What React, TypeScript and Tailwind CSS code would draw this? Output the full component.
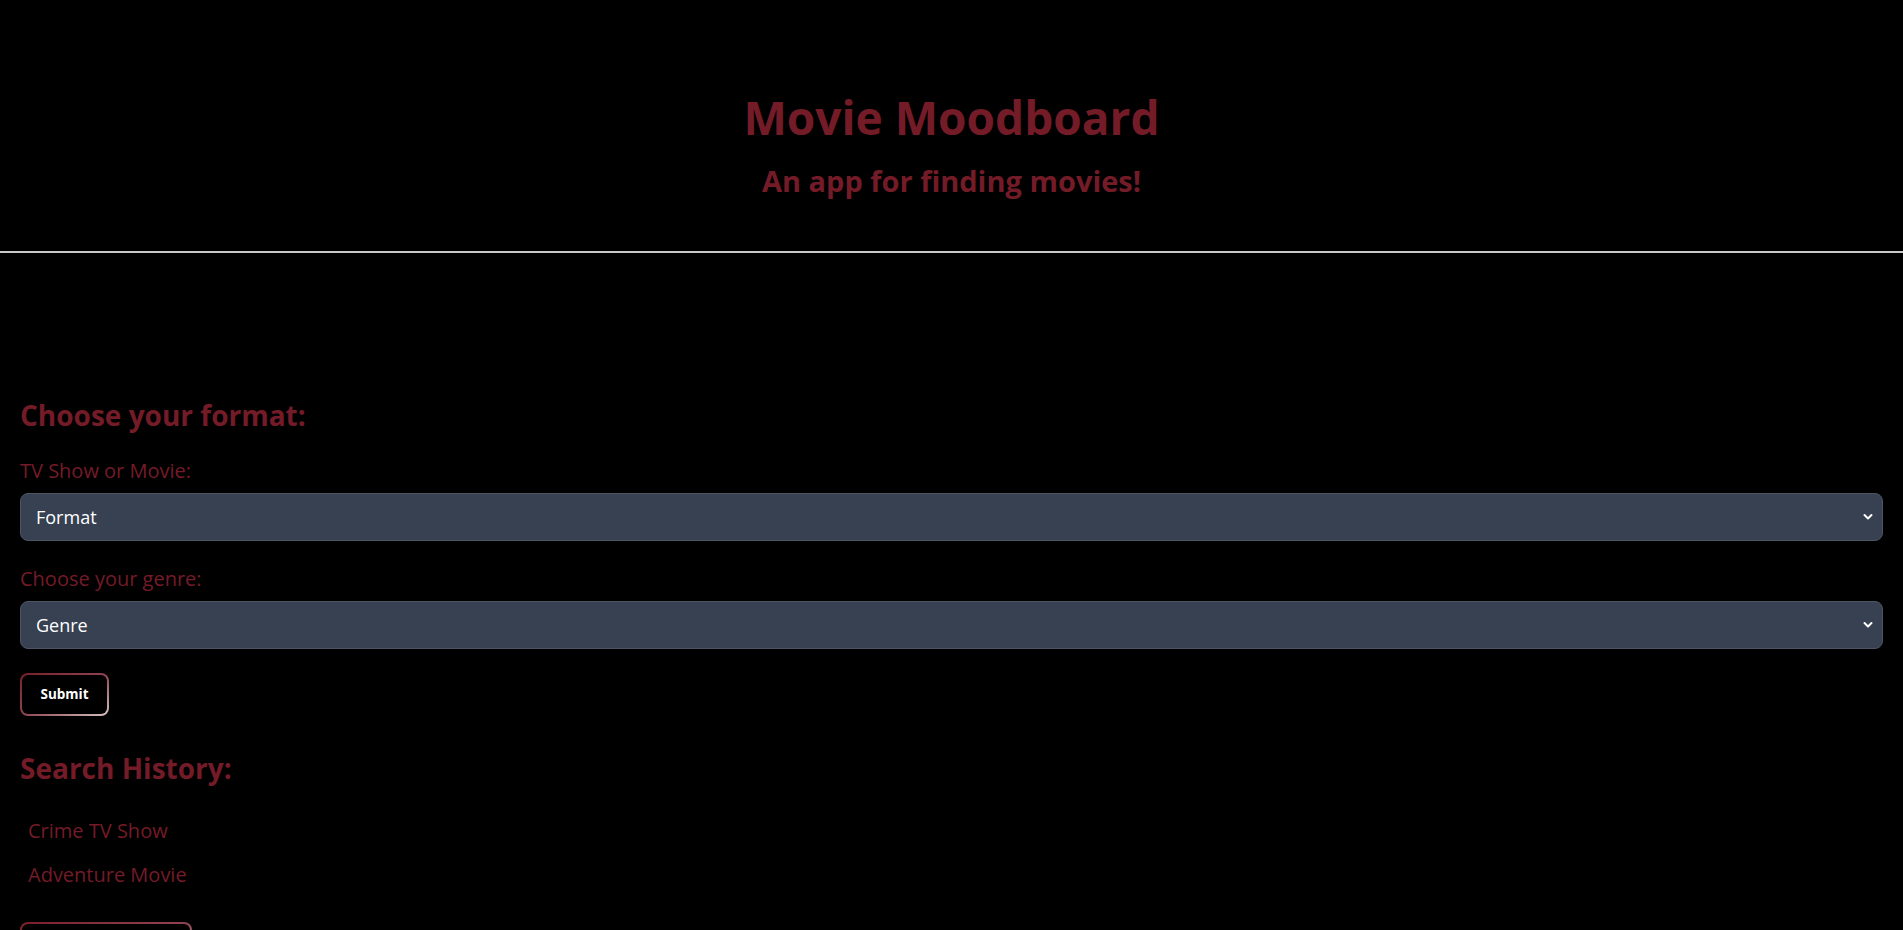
import React from "react";

const red = "text-[#741b28]";

function Chevron() {
  return (
    <svg
      className="pointer-events-none absolute right-[10px] top-1/2 -translate-y-1/2"
      width="10"
      height="7"
      viewBox="0 0 10 7"
      fill="none"
    >
      <path d="M1.5 1.5 L5 5 L8.5 1.5" stroke="white" strokeWidth="2" strokeLinecap="round" strokeLinejoin="round" />
    </svg>
  );
}

function Select({ label }: { label: string }) {
  return (
    <div className="relative">
      <select className="block h-12 w-full appearance-none rounded-lg border border-[#4b5563] bg-[#374151] px-[15px] text-lg leading-none text-white outline-none">
        <option>{label}</option>
      </select>
      <Chevron />
    </div>
  );
}

function GradButton({ children, w, h }: { children: React.ReactNode; w: string; h: string }) {
  return (
    <button className={`block rounded-lg bg-gradient-to-br from-[#7a1d2a] via-[#8e4450] to-[#d4c4c4] p-[2px] ${w} ${h}`}>
      <span className="flex h-full w-full items-center justify-center rounded-[6px] bg-black text-[13.5px] font-bold text-white">
        {children}
      </span>
    </button>
  );
}

export default function App() {
  return (
    <div className="min-h-screen bg-black font-['Open_Sans',sans-serif]">
      <header className="pt-[94px] text-center">
        <h1 className={`text-[46px] font-bold leading-none ${red}`}>Movie Moodboard</h1>
        <h2 className={`mt-[26px] text-[29px] font-bold leading-none ${red}`}>An app for finding movies!</h2>
      </header>
      <hr className="mt-[56px] border-0 border-t-2 border-[#c8c8c8]" />
      <main className="px-5">
        <h3 className={`mt-[148px] text-[28px] font-bold leading-none ${red}`}>Choose your format:</h3>
        <label className={`mt-[32px] block text-xl leading-none ${red}`}>TV Show or Movie:</label>
        <div className="mt-[12px]">
          <Select label="Format" />
        </div>
        <label className={`mt-[28px] block text-xl leading-none ${red}`}>Choose your genre:</label>
        <div className="mt-[12px]">
          <Select label="Genre" />
        </div>
        <div className="mt-[24px]">
          <GradButton w="w-[89px]" h="h-[43px]">Submit</GradButton>
        </div>
        <h3 className={`mt-[38px] text-[28px] font-bold leading-none ${red}`}>Search History:</h3>
        <ul className="pl-2">
          <li className={`mt-[39px] text-xl leading-none ${red}`}>Crime TV Show</li>
          <li className={`mt-[24px] text-xl leading-none ${red}`}>Adventure Movie</li>
        </ul>
        <div className="mt-[37px] pb-10">
          <GradButton w="w-[172px]" h="h-[43px]">Clear History</GradButton>
        </div>
      </main>
    </div>
  );
}
